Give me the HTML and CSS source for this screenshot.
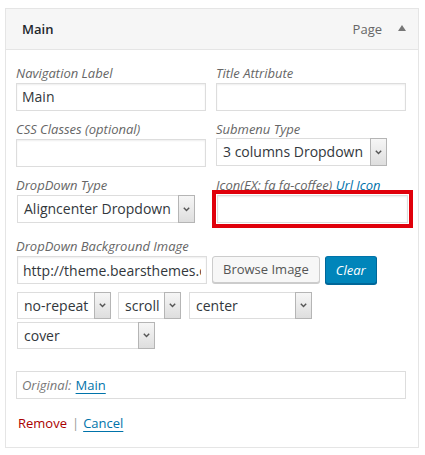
FILE: index.html
```html
<!DOCTYPE html>
<html>
<head>
<meta charset="utf-8">
<link rel="stylesheet" href="styles.css">
</head>
<body>
<div class="menu-item">
  <div class="bar">
    <span class="title">Main</span>
    <span class="controls"><span class="type">Page</span><span class="toggle"></span></span>
  </div>
  <div class="settings">
    <div class="grid">
      <div class="field">
        <label class="lbl">Navigation Label</label>
        <div class="input">Main</div>
      </div>
      <div class="field">
        <label class="lbl">Title Attribute</label>
        <div class="input"></div>
      </div>
      <div class="field">
        <label class="lbl">CSS Classes (optional)</label>
        <div class="input"></div>
      </div>
      <div class="field">
        <label class="lbl">Submenu Type</label>
        <div class="select w170"><span class="val">3 columns Dropdown</span><span class="arrow"><svg width="7" height="5" viewBox="0 0 7 5"><path d="M0.8 0.8 L3.5 3.6 L6.2 0.8" fill="none" stroke="#555" stroke-width="1.4"/></svg></span></div>
      </div>
      <div class="field">
        <label class="lbl">DropDown Type</label>
        <div class="select w177"><span class="val">Aligncenter Dropdown</span><span class="arrow"><svg width="7" height="5" viewBox="0 0 7 5"><path d="M0.8 0.8 L3.5 3.6 L6.2 0.8" fill="none" stroke="#555" stroke-width="1.4"/></svg></span></div>
      </div>
      <div class="field">
        <label class="lbl">Icon(EX: fa fa-coffee) <a class="link">Url Icon</a></label>
        <div class="input highlight"></div>
      </div>
    </div>

    <label class="lbl bg-label">DropDown Background Image</label>
    <div class="bg-row">
      <input class="input url" type="text" value="http://theme.bearsthemes.com/wp-content/uploads/bg.jpg">
      <span class="btn">Browse Image</span>
      <span class="btn primary">Clear</span>
    </div>
    <div class="sel-row">
      <div class="select w94"><span class="val">no-repeat</span><span class="arrow"><svg width="7" height="5" viewBox="0 0 7 5"><path d="M0.8 0.8 L3.5 3.6 L6.2 0.8" fill="none" stroke="#555" stroke-width="1.4"/></svg></span></div>
      <div class="select w63"><span class="val">scroll</span><span class="arrow"><svg width="7" height="5" viewBox="0 0 7 5"><path d="M0.8 0.8 L3.5 3.6 L6.2 0.8" fill="none" stroke="#555" stroke-width="1.4"/></svg></span></div>
      <div class="select w123"><span class="val">center</span><span class="arrow"><svg width="7" height="5" viewBox="0 0 7 5"><path d="M0.8 0.8 L3.5 3.6 L6.2 0.8" fill="none" stroke="#555" stroke-width="1.4"/></svg></span></div>
    </div>
    <div class="sel-row second">
      <div class="select w138"><span class="val">cover</span><span class="arrow"><svg width="7" height="5" viewBox="0 0 7 5"><path d="M0.8 0.8 L3.5 3.6 L6.2 0.8" fill="none" stroke="#555" stroke-width="1.4"/></svg></span></div>
    </div>

    <div class="original"><span class="orig-lbl">Original:</span> <a class="link ul">Main</a></div>

    <div class="actions"><a class="remove">Remove</a><span class="sep">|</span><a class="link ul cancel">Cancel</a></div>
  </div>
</div>
</body>
</html>
```

FILE: styles.css
```css
* { box-sizing: border-box; }
html, body { margin: 0; padding: 0; background: #fff; }
body {
  font-family: "Open Sans", "Liberation Sans", sans-serif;
  font-size: 13px;
  color: #32373c;
}
.menu-item {
  margin: 8px 0 0 5px;
  width: 414px;
  border: 1px solid #e5e5e5;
}
.bar {
  height: 41px;
  background: #f6f6f6;
  border-bottom: 1px solid #e5e5e5;
  display: flex;
  align-items: center;
  justify-content: space-between;
  padding: 0 12px 0 16px;
}
.title { font-weight: 600; font-size: 13px; color: #23282d; }
.controls { display: flex; align-items: center; }
.type { color: #666; font-size: 13px; }
.toggle {
  margin-left: 16px;
  width: 0; height: 0;
  border-left: 4px solid transparent;
  border-right: 4px solid transparent;
  border-bottom: 6px solid #777;
  margin-top: -2px;
}
.settings { padding: 14px 12px 15px 10px; }
.grid {
  display: grid;
  grid-template-columns: 190px 190px;
  column-gap: 10px;
  row-gap: 9px;
}
.lbl {
  display: block;
  font-style: italic;
  color: #666;
  font-size: 13px;
  line-height: 18px;
  margin-bottom: 1px;
  white-space: nowrap;
}
.input {
  display: block;
  height: 28px;
  border: 1px solid #ddd;
  box-shadow: inset 0 1px 2px rgba(0,0,0,.07);
  background: #fff;
  font-family: inherit;
  font-size: 14px;
  line-height: 26px;
  padding: 0 5px;
  margin: 0;
  color: #32373c;
  overflow: hidden;
  white-space: nowrap;
  outline: none;
}
.highlight {
  width: 191px;
  margin: 1px 0 0 1px;
  outline: 4px solid #e0000b;
  outline-offset: 1px;
}
.select {
  height: 28px;
  display: flex;
  border: 1px solid #ddd;
  background: #fff;
  font-size: 14px;
  line-height: 26px;
  color: #32373c;
}
.select .val { flex: 1; padding-left: 6px; white-space: nowrap; overflow: hidden; }
.select .arrow {
  width: 17px;
  margin: -1px -1px -1px 0;
  border: 1px solid #b5b5b5;
  background: linear-gradient(#f6f6f6, #dedede);
  display: flex;
  align-items: center;
  justify-content: center;
}
.w170 { width: 171px; margin-top: -1px; }
.w177 { width: 178px; margin-left: 1px; }
.w94 { width: 94px; }
.w63 { width: 63px; }
.w123 { width: 123px; }
.w138 { width: 138px; }
.link { color: #0073aa; font-style: italic; }
.link.ul { font-style: normal; text-decoration: underline; text-underline-offset: 3px; }
.bg-label { margin-top: 14px; }
.bg-row { display: flex; gap: 5px; align-items: center; }
.url { width: 190px; margin-left: 1px; }
.btn {
  height: 27px;
  line-height: 25px;
  padding: 0 10px;
  border: 1px solid #ccc;
  border-radius: 3px;
  background: #f7f7f7;
  box-shadow: 0 1px 0 #ccc;
  color: #555;
  font-size: 13px;
  white-space: nowrap;
  margin-top: -1px;
}
.btn.primary {
  background: #0085ba;
  border-color: #0073aa #006799 #006799;
  box-shadow: 0 1px 0 #006799;
  color: #fff;
  font-style: italic;
  font-size: 13px;
  height: 28px;
  line-height: 26px;
  padding: 0 10px;
}
.sel-row { display: flex; gap: 7px; margin-top: 8px; margin-left: 1px; }
.sel-row .select { height: 27px; line-height: 25px; }
.sel-row .w63 { margin-right: 1px; }
.sel-row.second { margin-top: 3px; }
.original {
  margin-top: 22px;
  height: 28px;
  border: 1px solid #ddd;
  line-height: 26px;
  padding: 0 5px;
  font-size: 13px;
}
.orig-lbl { font-style: italic; color: #777; }
.original .link { margin-left: 1px; }
.actions {
  margin-top: 15px;
  line-height: 18px;
  font-size: 13px;
  padding-left: 2px;
}
.remove { color: #a00; }
.sep { color: #999; margin: 0 4px 0 5px; }
.cancel { padding-bottom: 2px; }
```
